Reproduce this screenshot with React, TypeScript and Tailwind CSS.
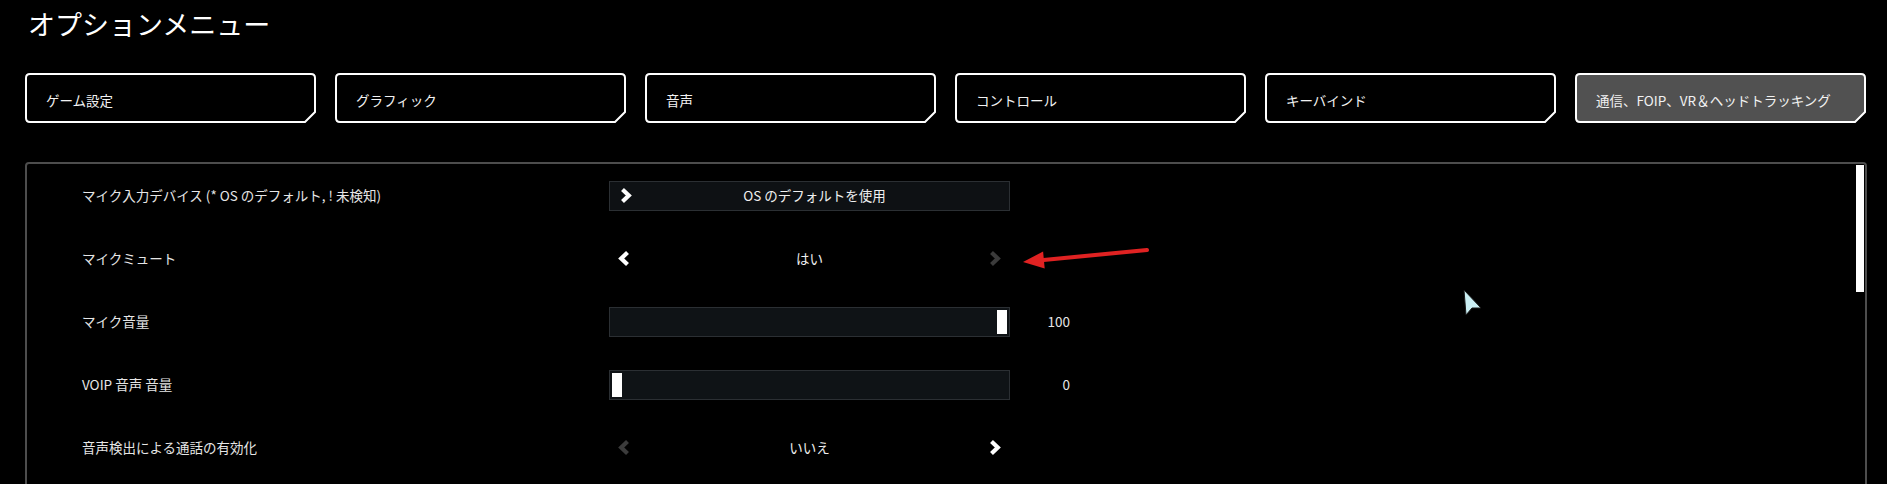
import React from 'react';

const tabs = [
  'ゲーム設定',
  'グラフィック',
  '音声',
  'コントロール',
  'キーバインド',
  '通信、FOIP、VR＆ヘッドトラッキング',
];

function Tab({ label, active }: { label: string; active?: boolean }) {
  return (
    <div className="relative w-[291px] h-[50px] shrink-0 flex items-center pl-[21px] pt-[4px]">
      <svg className="absolute inset-0" width="291" height="50" viewBox="0 0 291 50">
        <path
          d="M5 1H286Q290 1 290 5V39L280 49H5Q1 49 1 45V5Q1 1 5 1Z"
          fill={active ? '#515151' : '#000'}
          stroke="#fff"
          strokeWidth="2"
        />
      </svg>
      <span className="relative text-[13.5px] leading-[20px] text-[#f2f2f2]">{label}</span>
    </div>
  );
}

function Chevron({ dir, dim }: { dir: 'left' | 'right'; dim?: boolean }) {
  return (
    <svg width="13" height="17" viewBox="0 0 13 17" className="shrink-0">
      <path
        d={dir === 'right' ? 'M2.5 2.5L8.8 8.5L2.5 14.5' : 'M10.5 2.5L4.2 8.5L10.5 14.5'}
        fill="none"
        stroke={dim ? '#3b3b3b' : '#fff'}
        strokeWidth="4.2"
      />
    </svg>
  );
}

function Row({ label, children, value }: { label: string; children: React.ReactNode; value?: string }) {
  return (
    <div className="h-[63px] flex items-center pl-[55px]">
      <div className="w-[527px] text-[13.5px] text-[#e6e6e6]">{label}</div>
      <div className="w-[401px]">{children}</div>
      <div className="w-[60px] text-right text-[13.5px] text-[#e6e6e6]">{value}</div>
    </div>
  );
}

function Selector({ text, prevOff, nextOff }: { text: string; prevOff?: boolean; nextOff?: boolean }) {
  return (
    <div className="h-[30px] grid grid-cols-[13px_1fr_13px] items-center px-[8px]">
      <Chevron dir="left" dim={prevOff} />
      <span className="text-center text-[13.5px] text-[#f0f0f0]">{text}</span>
      <Chevron dir="right" dim={nextOff} />
    </div>
  );
}

function Slider({ value }: { value: number }) {
  return (
    <div className="h-[30px] flex p-[2px] border border-[#2b2f33] bg-[#0f1316]">
      <div style={{ flexGrow: value }} />
      <div className="w-[10px] h-full bg-white" />
      <div style={{ flexGrow: 100 - value }} />
    </div>
  );
}

export default function App() {
  return (
    <div className="relative w-[1887px] h-[484px] overflow-hidden bg-black pt-[5px] font-['Noto_Sans_CJK_JP','Noto_Sans',sans-serif] text-white">
      <h1 className="pl-[28px] text-[27px] leading-[38px] text-white">オプションメニュー</h1>

      <div className="mt-[30px] pl-[25px] flex gap-[19px]">
        {tabs.map((t, i) => (
          <Tab key={t} label={t} active={i === tabs.length - 1} />
        ))}
      </div>

      <div className="mt-[39px] ml-[25px] w-[1842px] h-[340px] flex border-2 border-[#4d4d4d] rounded-[4px]">
        <div className="flex-1">
          <Row label="マイク入力デバイス (* OS のデフォルト, ! 未検知)">
            <div className="h-[30px] grid grid-cols-[23px_1fr_23px] items-center pl-[10px] border border-[#2b2f33] bg-[#0e1114]">
              <Chevron dir="right" />
              <span className="text-center text-[13.5px] text-[#f0f0f0]">OS のデフォルトを使用</span>
              <span />
            </div>
          </Row>
          <Row label="マイクミュート">
            <Selector text="はい" nextOff />
          </Row>
          <Row label="マイク音量" value="100">
            <Slider value={100} />
          </Row>
          <Row label="VOIP 音声 音量" value="0">
            <Slider value={0} />
          </Row>
          <Row label="音声検出による通話の有効化">
            <Selector text="いいえ" prevOff />
          </Row>
        </div>
        <div className="w-[8px] mr-[1px] pt-[1px]">
          <div className="h-[127px] bg-white" />
        </div>
      </div>

      {/* red annotation arrow */}
      <svg className="absolute left-[1015px] top-[240px]" width="140" height="35" viewBox="0 0 140 35">
        <line x1="26" y1="20.2" x2="132" y2="10" stroke="#e02222" strokeWidth="4" strokeLinecap="round" />
        <polygon points="8,22 29.7,28.5 28.1,11.5" fill="#e02222" />
      </svg>

      {/* mouse cursor */}
      <svg className="absolute left-[1463px] top-[289px]" width="22" height="28" viewBox="0 0 22 28">
        <polygon points="1,1 18,19 9,19 3,26" fill="#cbeff4" stroke="#1a1a1a" strokeWidth="1" />
      </svg>
    </div>
  );
}
